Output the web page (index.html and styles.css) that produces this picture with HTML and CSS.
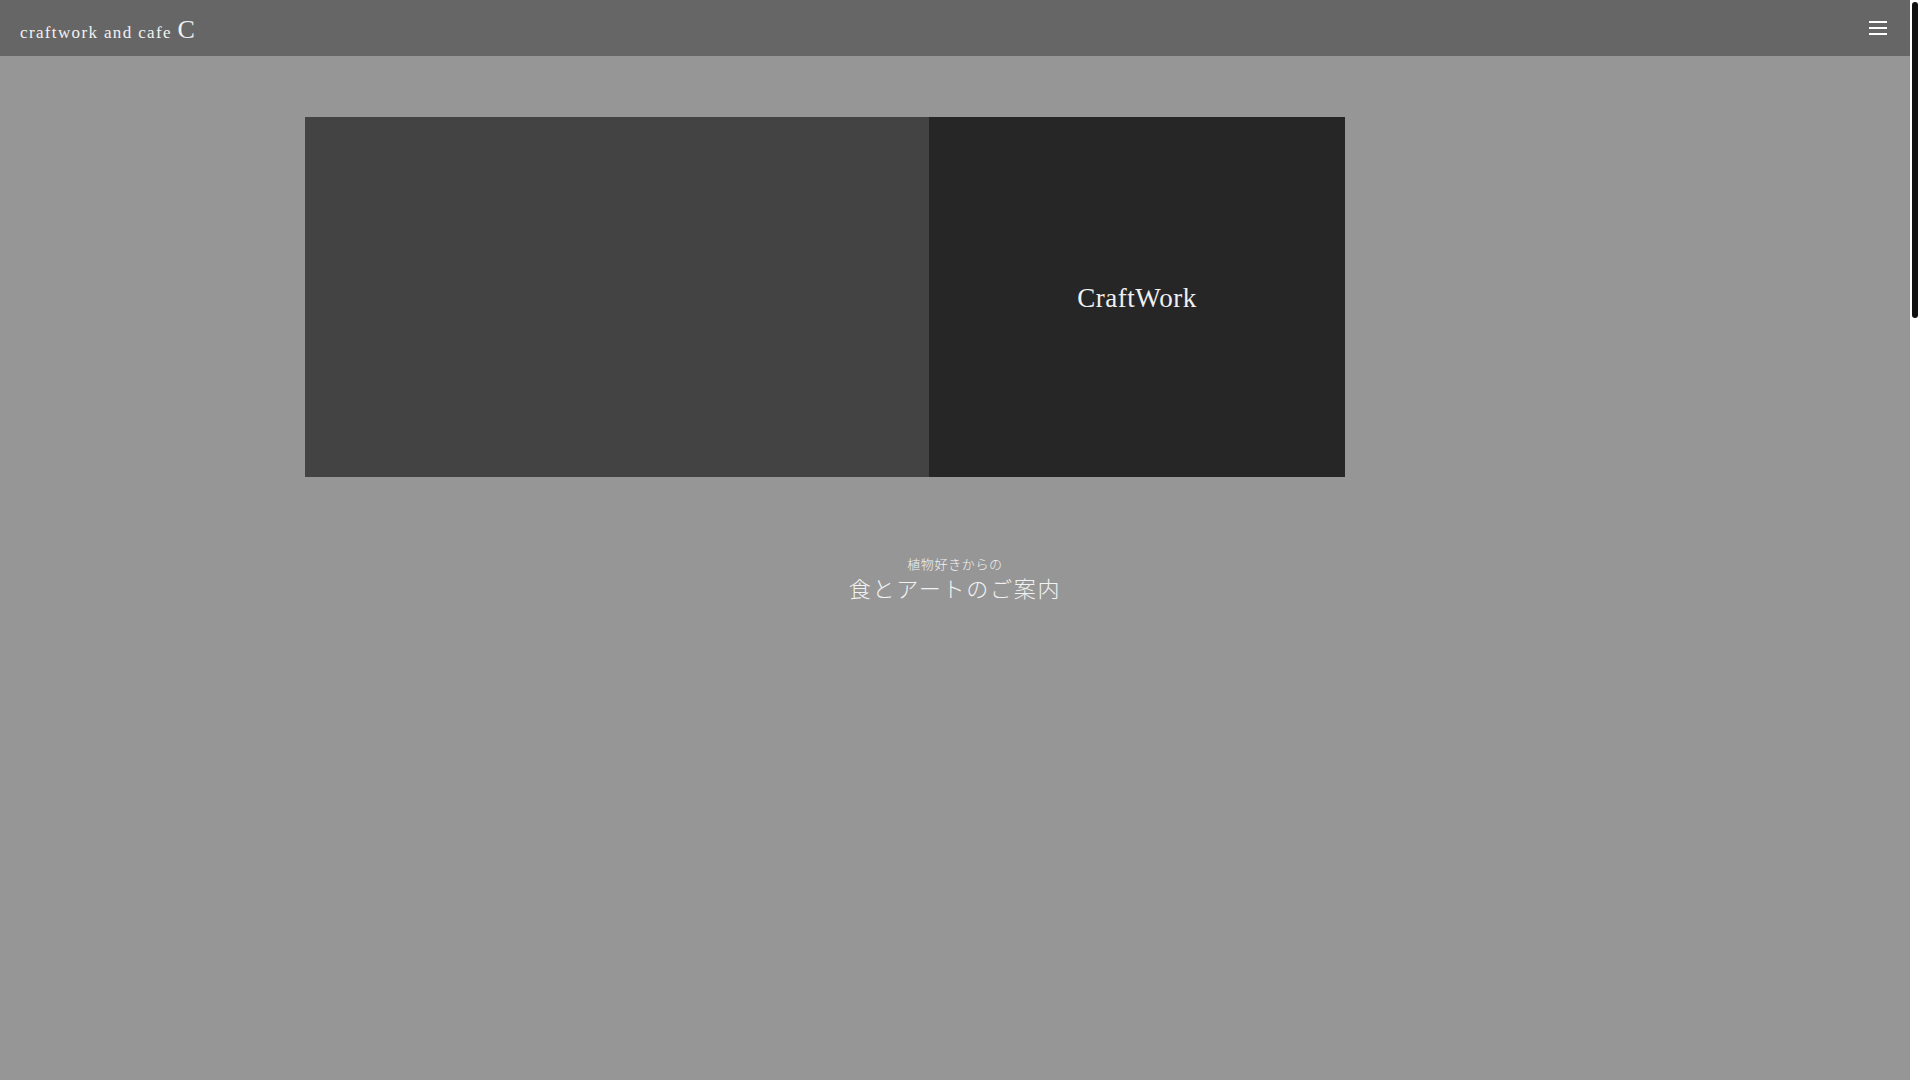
FILE: index.html
```html
<!DOCTYPE html>
<html lang="ja">
<head>
    <meta charset="UTF-8">
    <meta name="viewport" content="width=device-width, initial-scale=1.0">
    <title>craftwork and cafe C</title>
    <link rel="stylesheet" href="styles.css">
</head>
<body>
    <header class="site-header">
        <a class="logo" href="#">craftwork and cafe <span class="logo-c">C</span></a>
        <button class="menu-btn" aria-label="menu">
            <span></span>
            <span></span>
            <span></span>
        </button>
    </header>

    <main class="container">
        <section class="feature">
            <div class="feature-image"></div>
            <div class="feature-label">CraftWork</div>
        </section>

        <section class="intro">
            <p class="intro-sub">植物好きからの</p>
            <h2 class="intro-title">食とアートのご案内</h2>
        </section>

        <div class="intro-body"></div>
    </main>

    <!-- page scrollbar (drawn, since the browser hides its own) -->
    <div class="scrollbar"><div class="scrollbar-thumb"></div></div>
</body>
</html>
```

FILE: styles.css
```css
* {
    margin: 0;
    padding: 0;
    box-sizing: border-box;
}

body {
    font-family: "Liberation Serif", "DejaVu Serif", "Noto Sans CJK JP", serif;
    background: #969696;
    color: #f2f2f2;
    padding-right: 10px;
}

.site-header {
    height: 56px;
    background: #666;
    display: flex;
    align-items: center;
    justify-content: space-between;
    padding: 0 23px 0 20px;
}

.logo {
    color: #f2f2f2;
    text-decoration: none;
    font-size: 17px;
    letter-spacing: 0.08em;
    padding-top: 3px;
}

.logo-c {
    font-size: 26px;
    letter-spacing: 0;
}

.menu-btn {
    width: 18px;
    height: 14px;
    background: none;
    border: none;
    display: flex;
    flex-direction: column;
    justify-content: space-between;
    cursor: pointer;
}

.menu-btn span {
    display: block;
    height: 2px;
    background: #fff;
}

.container {
    max-width: 1300px;
    margin: 0 auto;
    padding-top: 61px;
}

.feature {
    width: 80%;
    height: 360px;
    display: flex;
}

.feature-image {
    flex: 0 0 60%;
    background: #434343;
}

.feature-label {
    flex: 1;
    background: #262626;
    display: flex;
    align-items: center;
    justify-content: center;
    font-size: 27px;
    letter-spacing: 0.02em;
    color: #f0f0f0;
    padding-top: 2px;
}

.intro {
    margin-top: 78px;
    text-align: center;
    font-family: "Noto Sans CJK JP", sans-serif;
    font-weight: 300;
}

.intro-sub {
    font-size: 13px;
    line-height: 18px;
    letter-spacing: 0.05em;
}

.intro-title {
    font-size: 22px;
    line-height: 29px;
    font-weight: 300;
    letter-spacing: 0.08em;
}

.intro-body {
    height: 3000px;
}

.scrollbar {
    position: fixed;
    top: 0;
    right: 0;
    width: 10px;
    height: 100vh;
    background: #fff;
}

.scrollbar-thumb {
    margin: 2px 2px 0;
    height: 316px;
    background: #111;
    border-radius: 3px;
}
```
